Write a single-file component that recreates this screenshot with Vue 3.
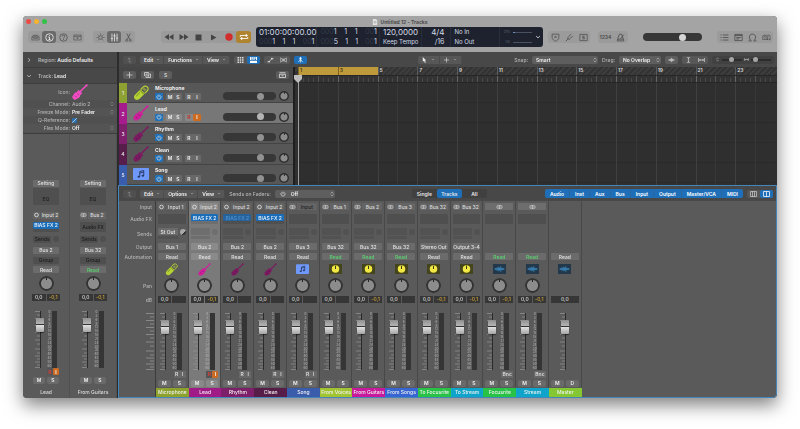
<script setup>
import { ref } from 'vue'

const tracks = ref([
  { n: 1, name: 'Microphone', color: '#8ea233', icon: 'mic', tint: '#b5d334' },
  { n: 2, name: 'Lead', color: '#a61c8d', icon: 'guitar', tint: '#cf1f9c', selected: true },
  { n: 3, name: 'Rhythm', color: '#7e206c', icon: 'guitar', tint: '#7c1b62' },
  { n: 4, name: 'Clean', color: '#571d4b', icon: 'guitar', tint: '#7c1b62' },
  { n: 5, name: 'Song', color: '#3a5cad', icon: 'song', tint: '#6f98fb' },
])

const strips = ref([
  { name: 'Microphone', color: '#8ca22c', input: 'Input 1', send: 'St Out', out: 'Bus 1', icon: 'mic', tint: '#b5d334', rec: true },
  { name: 'Lead', color: '#a01b86', input: 'Input 2', fx: 'on', out: 'Bus 2', icon: 'guitar', tint: '#cf1f9c', peak: '-0,1', rec: true, armed: true, selected: true },
  { name: 'Rhythm', color: '#7e1f69', input: 'Input 2', fx: 'off', out: 'Bus 2', icon: 'guitar', tint: '#7c1b62', rec: true },
  { name: 'Clean', color: '#561d48', input: 'Input 2', fx: 'on', out: 'Bus 2', icon: 'guitar', tint: '#7c1b62', rec: true },
  { name: 'Song', color: '#3a5cab', input: 'Input', dim: true, stereo: true, out: 'Bus 3', icon: 'song', tint: '#6f98fb', rec: true },
  { name: 'From Voices', color: '#a2c433', input: 'Bus 1', stereo: true, out: 'Bus 32', green: true, icon: 'clock' },
  { name: 'From Guitars', color: '#c8189b', input: 'Bus 2', stereo: true, out: 'Bus 32', green: true, icon: 'clock', peak: '-0,1' },
  { name: 'From Songs', color: '#3765d1', input: 'Bus 3', stereo: true, out: 'Bus 32', green: true, icon: 'clock' },
  { name: 'To Focusrite', color: '#28c247', input: 'Bus 32', stereo: true, out: 'Stereo Out', icon: 'clock', peak: '-0,1' },
  { name: 'To Stream', color: '#0fa4c9', input: 'Bus 32', stereo: true, out: 'Output 3-4', icon: 'clock', peak: '-0,1' },
  { name: 'Focusrite', color: '#28c247', output: true, green: true, icon: 'wave', peak: '-0,1' },
  { name: 'Stream', color: '#0fa4c9', output: true, green: true, icon: 'wave', peak: '-0,1' },
  { name: 'Master', color: '#84c732', master: true, icon: 'wave' },
])

const inspectorStrips = ref([
  { name: 'Lead', input: 'Input 2', fx: true, out: 'Bus 2', rec: true },
  { name: 'From Guitars', input: 'Bus 2', stereo: true, out: 'Bus 32', green: true },
])

const bars = Array.from({ length: 24 }, (_, i) => i + 1)
const meterMarks = [0, 3, 6, 9, 12, 15, 18, 21, 24, 30, 35, 40, 45, 50, 60]
const faderTicks = [0.5, 4, 7.5, 11, 14.5, 18, 21.5, 25, 29, 33, 38, 42, 45, 48, 51, 54, 56.5]
const filters = ['Audio', 'Inst', 'Aux', 'Bus', 'Input', 'Output', 'Master/VCA', 'MIDI']
</script>

<template>
  <svg class="sprite" aria-hidden="true">
    <symbol id="guitar" viewBox="0 0 20 20">
      <path fill="currentColor" d="M18.600 .300 19.800 1.400 18.800 3.200 17.700 3.400 10.800 10.400 12.400 10.600C13.200 11 12.900 11.800 12.200 12.200 10.800 12.900 10.400 13.600 10.200 14.800 10 16.800 8.400 17.600 7 18.200 5.800 18.800 5 19.800 3.600 19.600 2.200 19.400 .500 17.600 .400 16.200 .400 14.900 1.600 14.300 2.200 13.200 2.900 11.700 3.500 10.400 5.300 10.200 6.500 10 7 9.200 7.400 8.200 7.700 7.500 8.600 7.200 9 8L9.200 9.200 16.500 2.200 16.900 .900Z" />
      <path stroke="#0006" stroke-width="1" fill="none" d="M3.800 14.600 5.800 16.600M6.600 11.900 8.600 13.900" />
    </symbol>
    <symbol id="mic" viewBox="0 0 20 20">
      <path fill="currentColor" d="M2.600 12.200 9.300 5.200 14.900 10.600 8.300 17.300C6.600 18.900 4 19.300 2.300 17.600S1 13.900 2.600 12.200Z" />
      <path fill="none" stroke="currentColor" stroke-width="1.500" d="M9.900 5.300 12.600 2.600C14.300 1 16.300 1 17.800 2.400S19.200 5.900 17.600 7.500L14.900 10.200" />
      <path fill="currentColor" d="M11.800 5.200 14 3 17 6 14.800 8.200Z" opacity=".5" />
      <path fill="none" stroke="#0007" stroke-width="1" d="M8.500 6.500 13.800 11.800M4 14 8.500 9.500" />
    </symbol>
    <symbol id="song" viewBox="0 0 32 24">
      <rect width="32" height="24" rx="2" fill="currentColor" />
      <path fill="none" stroke="#26365c" stroke-width="1.800" d="M13.500 17V7L21.500 5V15M13.500 10 21.500 8" />
      <ellipse cx="11.600" cy="17.500" rx="2.500" ry="2" fill="#26365c" /><ellipse cx="19.600" cy="15.500" rx="2.500" ry="2" fill="#26365c" />
    </symbol>
    <symbol id="clock" viewBox="0 0 26 20">
      <rect width="26" height="20" fill="#45451d" />
      <circle cx="13" cy="10" r="7.500" fill="#f1e845" /><path stroke="#3c3b12" stroke-width="2" d="M13 3.500V10" />
    </symbol>
    <symbol id="wave" viewBox="0 0 26 20">
      <rect width="26" height="20" fill="#24384b" />
      <path stroke="#3e94cf" stroke-width="1.500" d="M3 10H23M5.500 8.500V11.500M8 7V13M10.500 5.500V14.500M13 7V13M15.500 4.500V15.500M18 7.500V12.500M20.500 8.500V11.500" />
    </symbol>
    <symbol id="power" viewBox="0 0 10 10"><path fill="none" stroke="currentColor" stroke-width="1.100" d="M5 1V5M3 2.300A3.400 3.400 0 1 0 7 2.300" /></symbol>
    <symbol id="mono" viewBox="0 0 10 10"><circle cx="5" cy="5" r="3" fill="none" stroke="currentColor" stroke-width="1.500" /></symbol>
    <symbol id="stereo" viewBox="0 0 14 10"><circle cx="5" cy="5" r="3.300" fill="none" stroke="currentColor" stroke-width="1.300" /><circle cx="9" cy="5" r="3.300" fill="none" stroke="currentColor" stroke-width="1.300" /></symbol>
    <symbol id="down" viewBox="0 0 10 10"><path fill="none" stroke="currentColor" stroke-width="1.500" d="M2 3.500 5 6.500 8 3.500" /></symbol>
    <symbol id="updown" viewBox="0 0 10 14"><path fill="none" stroke="currentColor" stroke-width="1.300" d="M2 5.500 5 2.500 8 5.500M2 8.500 5 11.500 8 8.500" /></symbol>
    <symbol id="back" viewBox="0 0 10 10"><path fill="none" stroke="currentColor" d="M2 4 4.500 1.500 7 4M4.500 1.500V8.500H8" /></symbol>
    <symbol id="library" viewBox="0 0 20 16"><path fill="none" stroke="currentColor" stroke-width="1.500" d="M2 7 5 3H15L18 7V13.500H2ZM2 7H18M6 7V10H14V7M6 5H14" /></symbol>
    <symbol id="info" viewBox="0 0 16 16"><circle cx="8" cy="8" r="6.700" fill="none" stroke="currentColor" stroke-width="1.600" /><path stroke="currentColor" stroke-width="1.800" d="M8 7V12M8 3.800V5.500M6 7H8M6 12H10" /></symbol>
    <symbol id="help" viewBox="0 0 16 16"><circle cx="8" cy="8" r="6.700" fill="none" stroke="currentColor" stroke-width="1.400" /><path fill="none" stroke="currentColor" stroke-width="1.500" d="M5.700 6C5.700 3 10.500 3.200 10.300 6 10.200 7.500 8 7.500 8 9.700M8 11V12.600" /></symbol>
    <symbol id="toolbar" viewBox="0 0 20 16"><path fill="none" stroke="currentColor" stroke-width="1.500" d="M2 2.500H18V13.500H2ZM2 5.500H18" /><path fill="currentColor" d="M7 8H13L10 12Z" /></symbol>
    <symbol id="smart" viewBox="0 0 16 16"><circle cx="8" cy="8" r="3.200" fill="none" stroke="currentColor" stroke-width="1.400" /><path stroke="currentColor" stroke-width="1.400" d="M8 1V3M1 8H3M13 8H15M3 3 4.500 4.500M13 3 11.500 4.500M3 13 4.500 11.500M13 13 11.500 11.500" /></symbol>
    <symbol id="mixer" viewBox="0 0 16 16"><path fill="none" stroke="currentColor" stroke-width="1.500" d="M3.500 1V15M8 1V15M12.500 1V15M1.500 10H5.500M6 5H10M10.500 9H14.500" /></symbol>
    <symbol id="scissors" viewBox="0 0 16 16"><path fill="none" stroke="currentColor" stroke-width="1.400" d="M5 1 10 11M11 1 6 11" /><circle cx="4.800" cy="13" r="1.800" fill="none" stroke="currentColor" stroke-width="1.300" /><circle cx="11.200" cy="13" r="1.800" fill="none" stroke="currentColor" stroke-width="1.300" /></symbol>
    <symbol id="rew" viewBox="0 0 20 14"><path fill="currentColor" d="M10 1V13L1 7ZM19 1V13L10 7Z" /></symbol>
    <symbol id="fwd" viewBox="0 0 20 14"><path fill="currentColor" d="M1 1V13L10 7ZM10 1V13L19 7Z" /></symbol>
    <symbol id="stop" viewBox="0 0 14 14"><path fill="currentColor" d="M1 1H13V13H1Z" /></symbol>
    <symbol id="play" viewBox="0 0 14 14"><path fill="currentColor" d="M2 1 13 7 2 13Z" /></symbol>
    <symbol id="record" viewBox="0 0 14 14"><circle cx="7" cy="7" r="6.500" fill="#d22c2b" /></symbol>
    <symbol id="cycle" viewBox="0 0 20 16"><path fill="none" stroke="currentColor" stroke-width="1.700" d="M2.500 8V5H15M17.500 8V11H5" /><path fill="currentColor" d="M13.500 1.500 18 5 13.500 8.500ZM6.500 7.500 2 11 6.500 14.500Z" /></symbol>
    <symbol id="shield" viewBox="0 0 16 16"><path fill="none" stroke="currentColor" stroke-width="1.400" d="M2 2H14V8C14 11 11 13.500 8 14.500 5 13.500 2 11 2 8ZM6 5 10 9M10 5 6 9" /></symbol>
    <symbol id="tuner" viewBox="0 0 16 16"><path fill="none" stroke="currentColor" stroke-width="1.500" d="M1.500 14.500 6 10M5.500 10.500C3.500 8 6 7 11 2M5.500 10.500C8 12.500 9 10 14 5" /></symbol>
    <symbol id="solo" viewBox="0 0 16 16"><path fill="none" stroke="currentColor" stroke-width="1.400" d="M1.500 2.500H14.500V13.500H1.500ZM10 5.500H6.500V8H9.500V10.500H6" /></symbol>
    <symbol id="metronome" viewBox="0 0 16 16"><path fill="none" stroke="currentColor" stroke-width="1.500" d="M6 2H10L14 14H2ZM3 11H13M8 10 14 3" /></symbol>
    <symbol id="list" viewBox="0 0 16 14"><path fill="none" stroke="currentColor" stroke-width="1.500" d="M1 2.500H3M5 2.500H15M1 7H3M5 7H15M1 11.500H3M5 11.500H15" /></symbol>
    <symbol id="note" viewBox="0 0 16 14"><path fill="none" stroke="currentColor" stroke-width="1.500" d="M1.500 1.500H14.500V12.500H1.500ZM1.500 3.500H14.500M4 7H12M4 9.500H9" /></symbol>
    <symbol id="loop" viewBox="0 0 16 16"><path fill="none" stroke="currentColor" stroke-width="1.500" d="M1 14H6C1 11 1 2 8 2S15 11 10 14H15" /></symbol>
    <symbol id="media" viewBox="0 0 20 16"><path fill="none" stroke="currentColor" stroke-width="1.400" d="M1.500 4.500H11V12.500H1.500ZM4 4.500 5 2.500H8L9 4.500M13 11V2L18 4V12" /><circle cx="6" cy="8.500" r="2" fill="none" stroke="currentColor" /><circle cx="12" cy="12" r="1.800" fill="currentColor" /><circle cx="16.800" cy="12.500" r="1.800" fill="currentColor" /></symbol>
    <symbol id="doc" viewBox="0 0 12 14"><path fill="#e4e4e4" d="M1 0H8L11 3V14H1Z" /><circle cx="6" cy="7.500" r="2.500" fill="none" stroke="#999" stroke-width="1.400" /></symbol>
    <symbol id="grid" viewBox="0 0 12 12"><path fill="currentColor" d="M0 0H3V3H0ZM4.500 0H7.500V3H4.500ZM9 0H12V3H9ZM0 4.500H3V7.500H0ZM4.500 4.500H7.500V7.500H4.500ZM9 4.500H12V7.500H9ZM0 9H3V12H0ZM4.500 9H7.500V12H4.500ZM9 9H12V12H9Z" /></symbol>
    <symbol id="lanes" viewBox="0 0 14 12"><path fill="currentColor" d="M0 0H3V6H0ZM4.500 0H7V4H4.500ZM8.500 0H11V4H8.500ZM12 0H14V6H12ZM0 7.500H14V12H0ZM4 5H10V6H4Z" /></symbol>
    <symbol id="automation" viewBox="0 0 16 12"><path fill="none" stroke="currentColor" stroke-width="1.500" d="M1 10H5L11 3H15" /><circle cx="5" cy="9.500" r="2" fill="currentColor" /><circle cx="11" cy="3" r="2" fill="currentColor" /></symbol>
    <symbol id="flex" viewBox="0 0 16 12"><path fill="none" stroke="currentColor" stroke-width="1.300" d="M1.500 1V11L7 6ZM14.500 1V11L9 6ZM6 2 10 10M10 2 6 10" /></symbol>
    <symbol id="catch" viewBox="0 0 14 14"><path fill="none" stroke="currentColor" stroke-width="1.500" d="M7 1V13M7 5 2 12M7 5 12 12M4 4 10 4" /><circle cx="7" cy="2.500" r="2" fill="currentColor" /></symbol>
    <symbol id="pointer" viewBox="0 0 10 14"><path fill="currentColor" d="M1 0 9 8H6L8 13 6 14 4 9 1 11Z" /></symbol>
    <symbol id="cross" viewBox="0 0 12 12"><path stroke="currentColor" stroke-width="1.300" d="M6 0V12M0 6H12" /></symbol>
    <symbol id="dup" viewBox="0 0 14 12"><path fill="none" stroke="currentColor" stroke-width="1.400" d="M1 8V1H9V3M4 4H13V11H4ZM8.500 5.500V9.500M6.500 7.500H10.500" /></symbol>
    <symbol id="tray" viewBox="0 0 14 12"><path fill="none" stroke="currentColor" stroke-width="1.500" d="M1 4.500H13V11H1ZM1 1.500H13M5 7.500H9" /></symbol>
    <symbol id="ripple" viewBox="0 0 16 12"><path stroke="currentColor" stroke-width="1.300" d="M1 6H15M3 4.500V7.500M5.500 3V9M8 1V11M10.500 3V9M13 4.500V7.500" /></symbol>
    <symbol id="vzoom" viewBox="0 0 10 14"><path fill="none" stroke="currentColor" stroke-width="1.300" d="M1 1H9M1 13H9M5 2V12M3 5 5 3 7 5M3 9 5 11 7 9" /></symbol>
    <symbol id="hzoom" viewBox="0 0 14 10"><path fill="none" stroke="currentColor" stroke-width="1.300" d="M1 1V9M13 1V9M2 5H12M5 3 3 5 5 7M9 3 11 5 9 7" /></symbol>
    <symbol id="cols3" viewBox="0 0 14 12"><path fill="none" stroke="currentColor" stroke-width="1.300" d="M1 1H13V11H1ZM5 1V11M9 1V11" /></symbol>
    <symbol id="cols2" viewBox="0 0 14 12"><path fill="none" stroke="currentColor" stroke-width="1.500" d="M1 1H13V11H1ZM7 1V11" /></symbol>
  </svg>

  <div class="page">
    <div class="window">
      <header class="chrome">
        <div class="titlebar">
          <div class="lights"><i class="red"></i><i class="amber"></i><i class="green"></i></div>
          <h1><svg class="docicon"><use href="#doc" /></svg>Untitled 12 - Tracks</h1>
        </div>
        <div class="controlbar">
          <div class="group">
            <button aria-label="Library"><svg><use href="#library" /></svg></button>
            <button class="on" aria-label="Inspector"><svg><use href="#info" /></svg></button>
            <button aria-label="Quick Help"><svg><use href="#help" /></svg></button>
            <button aria-label="Toolbar"><svg><use href="#toolbar" /></svg></button>
          </div>
          <div class="group second">
            <button aria-label="Smart Controls"><svg><use href="#smart" /></svg></button>
            <button class="on" aria-label="Mixer"><svg><use href="#mixer" /></svg></button>
            <button aria-label="Editors"><svg><use href="#scissors" /></svg></button>
          </div>
          <div class="group transport">
            <button aria-label="Rewind"><svg><use href="#rew" /></svg></button>
            <button aria-label="Forward"><svg><use href="#fwd" /></svg></button>
            <button aria-label="Stop"><svg class="small"><use href="#stop" /></svg></button>
            <button aria-label="Play"><svg class="small"><use href="#play" /></svg></button>
            <button aria-label="Record"><svg><use href="#record" /></svg></button>
            <button class="gold" aria-label="Cycle"><svg><use href="#cycle" /></svg></button>
          </div>
          <div class="lcd">
            <div class="cell">
              <div>01:00:00:00.00</div>
              <div class="pos"><span><s>000</s>1</span><span>1</span><span>1</span><span><s>00</s>1</span></div>
            </div>
            <div class="cell">
              <div class="pos"><span><s>000</s>1</span><span>1</span><span>1</span><span><s>00</s>1</span></div>
              <div class="pos"><span><s>000</s>5</span><span>1</span><span>1</span><span><s>00</s>1</span></div>
            </div>
            <div class="cell"><div>120,0000</div><div class="txt">Keep Tempo</div></div>
            <div class="cell right"><div>4/4</div><div class="sig">/16</div></div>
            <div class="cell"><div class="txt">No In</div><div class="txt">No Out</div></div>
            <div class="cell load"><div>CPU<b class="cpu"></b></div><div>HD<b></b></div></div>
            <button class="more" aria-label="Display mode"><svg><use href="#down" /></svg></button>
          </div>
          <div class="group">
            <button aria-label="Replace"><svg><use href="#shield" /></svg></button>
            <button aria-label="Tuner"><svg><use href="#tuner" /></svg></button>
            <button aria-label="Solo"><svg><use href="#solo" /></svg></button>
          </div>
          <div class="group count">
            <button>1234</button>
            <button aria-label="Metronome"><svg><use href="#metronome" /></svg></button>
          </div>
          <input class="bar output-level" type="range" value="72" aria-label="Master volume" />
          <div class="group last">
            <button aria-label="List editors"><svg><use href="#list" /></svg></button>
            <button aria-label="Note pad"><svg><use href="#note" /></svg></button>
            <button aria-label="Loop browser"><svg><use href="#loop" /></svg></button>
            <button aria-label="Media browser"><svg><use href="#media" /></svg></button>
          </div>
        </div>
      </header>

      <div class="body">
        <aside class="inspector">
          <button class="head"><svg class="turned"><use href="#down" /></svg><span>Region: <b>Audio Defaults</b></span></button>
          <button class="head"><svg><use href="#down" /></svg><span>Track: <b>Lead</b></span></button>
          <dl class="params">
            <div class="iconrow"><dt>Icon:</dt><dd><svg class="bigicon"><use href="#guitar" /></svg></dd></div>
            <div><dt>Channel:</dt><dd>Audio 2<svg class="ud"><use href="#updown" /></svg></dd></div>
            <div><dt><label for="freeze">Freeze Mode:</label></dt><dd><select id="freeze"><option>Pre Fader</option></select><svg class="ud"><use href="#updown" /></svg></dd></div>
            <div><dt><label for="qref">Q-Reference:</label></dt><dd><input id="qref" type="checkbox" checked /></dd></div>
            <div><dt><label for="flexmode">Flex Mode:</label></dt><dd><select id="flexmode"><option>Off</option></select><svg class="ud"><use href="#updown" /></svg></dd></div>
          </dl>
          <div class="pair">
            <section v-for="s in inspectorStrips" :key="s.name" class="istrip">
              <button class="slot">Setting</button>
              <button class="slot well eq">EQ</button>
              <div class="io"><button :aria-label="'Format ' + s.name"><svg><use :href="s.stereo ? '#stereo' : '#mono'" /></svg></button><button>{{ s.input }}</button></div>
              <div class="slot well fxwell"><button v-if="s.fx" class="fx">BIAS FX 2</button><template v-else>Audio FX</template></div>
              <div class="sends"><button class="slot well">Sends</button><i></i></div>
              <button class="slot">{{ s.out }}</button>
              <button class="slot well">Group</button>
              <button class="slot" :class="{ read: s.green }">Read</button>
              <input class="knob" type="range" :aria-label="'Pan ' + s.name" />
              <div class="db"><span>0,0</span><span class="peak">-0,1</span></div>
              <div class="faderbox">
                <svg class="ticks" viewBox="0 0 5 57"><path v-for="(t, i) in faderTicks" :key="t" stroke="currentColor" stroke-width=".7" :d="`M${i % 2 ? 2 : 0} ${t}H5`" /></svg>
                <input class="fader" type="range" value="84" :aria-label="'Volume ' + s.name" />
                <div class="marks"><span v-for="m in meterMarks" :key="m">{{ m }}</span></div>
                <div class="meter"></div>
              </div>
              <div class="ri"><template v-if="s.rec"><button class="r armed">R</button><button class="i armed">I</button></template></div>
              <div class="ms"><button>M</button><button>S</button></div>
              <div class="iname">{{ s.name }}</div>
            </section>
          </div>
        </aside>

        <main class="work">
          <section class="arrange">
            <div class="strip-bar">
              <button class="tb dimmed" aria-label="Up"><svg><use href="#back" /></svg></button>
              <div class="menus"><button>Edit<svg><use href="#down" /></svg></button><button>Functions<svg><use href="#down" /></svg></button><button>View<svg><use href="#down" /></svg></button></div>
              <div class="seg"><button aria-label="Grid"><svg><use href="#grid" /></svg></button><button class="blue" aria-label="Lanes"><svg><use href="#lanes" /></svg></button></div>
              <div class="seg"><button aria-label="Automation"><svg><use href="#automation" /></svg></button><button aria-label="Flex"><svg><use href="#flex" /></svg></button></div>
              <button class="tb blue" aria-label="Catch playhead"><svg><use href="#catch" /></svg></button>
              <div class="menus tools"><button aria-label="Pointer tool"><svg><use href="#pointer" /></svg><svg><use href="#down" /></svg></button><button aria-label="Marquee tool"><svg><use href="#cross" /></svg><svg><use href="#down" /></svg></button></div>
              <label for="snap">Snap:</label>
              <div class="pick snap"><select id="snap"><option>Smart</option></select><svg><use href="#updown" /></svg></div>
              <label for="drag">Drag:</label>
              <div class="pick drag"><select id="drag"><option>No Overlap</option></select><svg><use href="#updown" /></svg></div>
              <button class="tb" aria-label="Waveform zoom"><svg><use href="#ripple" /></svg></button>
              <div class="seg"><button aria-label="Fit vertically"><svg><use href="#vzoom" /></svg></button><button aria-label="Fit horizontally"><svg><use href="#hzoom" /></svg></button></div>
              <div class="zooms"><svg><use href="#updown" /></svg><input type="range" value="45" aria-label="Vertical zoom" /><svg><use href="#hzoom" /></svg><input type="range" value="10" aria-label="Horizontal zoom" /></div>
            </div>
            <div class="arrange-body">
              <div class="headers">
                <div class="addbar"><button class="tb" aria-label="Add track"><svg><use href="#cross" /></svg></button><button class="tb" aria-label="Duplicate track"><svg><use href="#dup" /></svg></button><button class="tb">S</button><button class="tb end" aria-label="Track header settings"><svg><use href="#tray" /></svg></button></div>
                <article v-for="t in tracks" :key="t.n" class="track" :class="{ selected: t.selected }">
                  <div class="num" :style="{ background: t.color }">{{ t.n }}</div>
                  <svg class="ticon" :style="{ color: t.tint }"><use :href="'#' + t.icon" /></svg>
                  <div class="info">
                    <h2>{{ t.name }}</h2>
                    <div class="btns">
                      <button class="pwr" :aria-label="'Power ' + t.name"><svg><use href="#power" /></svg></button>
                      <div><button>M</button><button>S</button></div>
                      <div><button :class="{ rarm: t.selected }">R</button><button :class="{ iarm: t.selected }">I</button></div>
                    </div>
                  </div>
                  <input class="bar" type="range" value="76" :aria-label="'Volume ' + t.name" />
                  <input class="knob mini" type="range" :aria-label="'Pan ' + t.name" />
                </article>
              </div>
              <div class="gutter"></div>
              <div class="timeline">
                <div class="ruler">
                  <div v-for="b in bars" :key="b" class="bar-cell" :class="{ cyc: b < 5 }">{{ b % 2 ? b : '' }}</div>
                </div>
                <div class="ruler beats"><div v-for="b in bars" :key="b" class="beat-cell"><i></i><i></i><i></i></div></div>
                <div class="canvas"><div v-for="b in bars" :key="b"></div></div>
                <div class="playhead"><svg viewBox="0 0 8 8"><path fill="#bdbdbd" d="M0 0H8V4L4 8 0 4Z" /></svg></div>
              </div>
            </div>
          </section>

          <section class="mixer">
            <div class="strip-bar">
              <button class="tb dimmed" aria-label="Up"><svg><use href="#back" /></svg></button>
              <div class="menus"><button>Edit<svg><use href="#down" /></svg></button><button>Options<svg><use href="#down" /></svg></button><button>View<svg><use href="#down" /></svg></button></div>
              <label for="sof">Sends on Faders:</label>
              <div class="pick sof"><button aria-label="Sends on faders power"><svg class="pw"><use href="#power" /></svg></button><select id="sof"><option>Off</option></select><svg><use href="#updown" /></svg></div>
              <div class="tabs"><button>Single</button><button class="blue">Tracks</button><button>All</button></div>
              <div class="filters"><button v-for="f in filters" :key="f">{{ f }}</button></div>
              <div class="seg views"><button aria-label="Narrow strips"><svg><use href="#cols3" /></svg></button><button class="blue" aria-label="Wide strips"><svg><use href="#cols2" /></svg></button></div>
            </div>
            <div class="mixbody">
              <div class="rowlabels">
                <span>Input</span><span>Audio FX</span><span>Sends</span><span>Output</span><span>Automation</span><span></span><span>Pan</span><span>dB</span>
                <svg class="ticks scale" viewBox="0 0 9 57"><path v-for="(t, i) in faderTicks" :key="t" stroke="currentColor" stroke-width=".8" :d="`M${i % 2 ? 5 : 1} ${t}H9`" /></svg>
              </div>
              <div class="strips">
                <section v-for="s in strips" :key="s.name" class="cstrip" :class="{ selected: s.selected, solo: s.master }">
                  <div class="io" v-if="s.input"><button :aria-label="'Format ' + s.name"><svg><use :href="s.stereo ? '#stereo' : '#mono'" /></svg></button><button :class="{ dim: s.dim }">{{ s.input }}</button></div>
                  <div class="io" v-else-if="s.output"><button class="wide" :aria-label="'Format ' + s.name"><svg><use href="#stereo" /></svg></button></div>
                  <div v-else></div>
                  <div v-if="!s.master" class="slot well fxwell"><button v-if="s.fx" class="fx" :class="s.fx">BIAS FX 2</button></div>
                  <div v-else></div>
                  <div v-if="s.input" class="sendbox">
                    <button v-if="s.send" class="send lit">{{ s.send }}</button><span v-else class="send"></span><i :class="{ lit: s.send }"></i><span class="send thin"></span>
                  </div>
                  <div v-else></div>
                  <button v-if="s.out" class="slot">{{ s.out }}</button>
                  <div v-else></div>
                  <button class="slot" :class="{ read: s.green }">Read</button>
                  <svg class="sicon" :class="s.icon" :style="{ color: s.tint }"><use :href="'#' + s.icon" /></svg>
                  <input v-if="!s.master" class="knob" type="range" :aria-label="'Pan ' + s.name" />
                  <div v-else></div>
                  <div class="db"><span>0,0</span><span v-if="!s.master" class="peak">{{ s.peak }}</span></div>
                  <div class="faderbox">
                    <svg class="ticks" viewBox="0 0 5 57"><path v-for="(t, i) in faderTicks" :key="t" stroke="currentColor" stroke-width=".7" :d="`M${i % 2 ? 2 : 0} ${t}H5`" /></svg>
                    <input class="fader" type="range" value="84" :aria-label="'Volume ' + s.name" />
                    <template v-if="!s.master"><div class="marks"><span v-for="m in meterMarks" :key="m">{{ m }}</span></div><div class="meter"></div></template>
                  </div>
                  <div class="ri">
                    <template v-if="s.rec"><button class="r" :class="{ armed: s.armed }">R</button><button class="i" :class="{ armed: s.armed }">I</button></template>
                    <button v-else-if="s.output" class="bnc">Bnc</button>
                  </div>
                  <div class="ms"><button>M</button><button>{{ s.master ? 'D' : 'S' }}</button></div>
                  <div class="cname" :style="{ background: s.color }">{{ s.name }}</div>
                </section>
              </div>
              <div class="rest"></div>
            </div>
          </section>
        </main>
      </div>
    </div>
  </div>
</template>

<style>
body { background: #fff; }
</style>

<style scoped>
* { box-sizing: border-box; margin: 0; padding: 0; }
.sprite { position: absolute; width: 0; height: 0; }
button, input, select { font: inherit; color: inherit; border: 0; background: none; min-width: 0; appearance: none; outline: 0; border-radius: 0; }
button { display: flex; align-items: center; justify-content: center; white-space: nowrap; }
svg { display: block; width: 8px; height: 8px; flex: none; }
i { display: block; }

.page { padding: 16px 23px 31px; font: 500 5px/6px Inter, "Liberation Sans", sans-serif; color: #dcdcdc; filter: drop-shadow(0 7px 9px rgba(0, 0, 0, .5)); }
.window { border-radius: 4px; overflow: hidden; background: #5a5a5a; }

/* title bar and control bar */
.chrome { background: #a4a4a4; height: 36px; color: #505050; }
.titlebar { display: grid; place-items: center; height: 11px; }
.titlebar > * { grid-area: 1 / 1; }
.lights { display: flex; gap: 3px; justify-self: start; padding-left: 3px; }
.lights i { width: 5px; height: 5px; border-radius: 50%; }
.red { background: #ee4b47; } .amber { background: #f5b32f; } .green { background: #31c146; }
h1 { display: flex; align-items: center; gap: 2px; font-size: 5px; font-weight: 700; color: #4c4c4c; }
.docicon { width: 6px; height: 6px; }
.controlbar { display: flex; align-items: center; height: 20px; padding: 0 4px 0 5px; }
.group { display: flex; align-items: center; background: #9b9b9b; border-radius: 3px; height: 12px; }
.group button { width: 14px; height: 12px; border-radius: 3px; }
.group svg { width: 9px; height: 9px; }
.group .on { background: #6a6a6a; color: #e2e2e2; }
.second { margin-left: 9px; }
.transport { margin-left: 26px; color: #444; }
.transport button { width: 15px; }
.transport svg { width: 10px; height: 8px; }
.transport .small { width: 7px; height: 7px; }
.transport .gold { background: #b0832e; color: #fff; }
.lcd { flex: 1; display: grid; grid-template-columns: 61fr 62fr 42fr 29fr 48fr 34fr 9px; height: 20px; margin: 0 5px; background: #1d222e; border-radius: 3px; color: #d5dbe6; font: 400 8px/10px Inter, "Liberation Sans", sans-serif; }
.cell { border-right: 1px solid #272d39; padding: 0 2px 0 3px; display: flex; flex-direction: column; white-space: nowrap; min-width: 0; }
.cell .txt { font-size: 6px; }
.cell.right { text-align: right; padding-right: 6px; }
.cell .sig { font-size: 7px; }
.load { color: #5e6675; font-size: 3px; border: 0; }
.load div { display: flex; align-items: center; gap: 3px; justify-content: flex-end; }
.load b { width: 19px; height: 1px; background: #4a5261; }
.load .cpu { background: linear-gradient(90deg, #6d8fc0 12%, #4a5261 12%); }
.pos { display: flex; justify-content: space-between; font-size: 7px; }
.pos s { text-decoration: none; color: #353b48; }
.more svg { width: 6px; height: 6px; }
.count { margin: 0 15px 0 8px; }
.count button { width: 15px; font-size: 5px; font-weight: 700; }
.bar { height: 8px; border-radius: 4px; background: #373737; }
.bar::-webkit-slider-thumb { appearance: none; width: 7px; height: 7px; border-radius: 50%; background: #929292; }
.output-level { width: 59px; padding: 0 3px; }
.output-level::-webkit-slider-thumb { background: #d5d5d5; }
.last { margin-left: 15px; }

.body { display: flex; }

/* inspector */
.inspector { flex: 0 0 95px; border-right: 1px solid #2c2c2c; background: #5a5a5a; display: flex; flex-direction: column; }
.head { height: 16px; justify-content: flex-start; gap: 6px; padding-left: 3px; background: #484848; border-bottom: 1px solid #3d3d3d; color: #bdbdbd; }
.head b { color: #efefef; font-weight: 600; }
.head svg { width: 6px; height: 6px; }
.turned { transform: rotate(-90deg); }
.params { height: 50px; padding-bottom: 2px; border-bottom: 1px solid #3e3e3e; color: #b2b2b2; background: #505050; }
.params > div { display: grid; grid-template-columns: 47px 1fr; gap: 2px; height: 8px; align-items: center; }
.params > div:nth-child(odd) { background: #545454; }
.params .iconrow { height: 16px; }
.params dt { text-align: right; white-space: nowrap; }
.params dd { display: flex; align-items: center; justify-content: space-between; padding-right: 3px; white-space: nowrap; }
.params select { color: #f2f2f2; font-weight: 600; }
.ud { width: 4px; height: 6px; }
.bigicon { width: 16px; height: 16px; color: #f24cc4; }
.params input { width: 5px; height: 5px; border-radius: 1px; background: linear-gradient(135deg, #2c6ea9 45%, #a9cbe8 45%, #a9cbe8 60%, #2c6ea9 60%); }
.pair { flex: 1; display: grid; grid-template-columns: 1fr 1fr; }
.istrip { display: grid; padding: 44px 10px 0; grid-template-rows: 10px 22px 10px 13px 12px 10px 10px 9px 19px 9px minmax(66px, 1fr) 7px 10px 13px; align-items: center; border-right: 1px solid #515151; }
.istrip > * { min-width: 0; }
.slot { height: 7px; width: 100%; border-radius: 1px; background: #6b6b6b; color: #e0e0e0; overflow: hidden; }
.well { background: #4f4f4f; color: #1c1c1c; }
.eq { height: 17px; align-self: start; padding-top: 4px; }
.fxwell { height: 10px; display: flex; align-items: center; justify-content: center; white-space: nowrap; }
.fx { width: 100%; height: 7px; background: #1b6db8; color: #f1f6fb; align-self: flex-start; border-radius: 1px; }
.fx.off { color: #4c95d6; background: #27629b; }
.io { display: flex; gap: 1px; }
.io button { height: 7px; background: #646464; flex: 1; }
.io button:first-child { flex: 0 0 7px; }
.io .wide:first-child { flex: 1; background: #6d6d6d; }
.io svg { width: 7px; height: 6px; }
.io .dim { color: #222; }
.sends { display: flex; gap: 2px; align-items: center; }
.sends .slot { width: 20px; }
.sends i { width: 6px; height: 6px; border-radius: 50%; background: #4f4f4f; }
.read, .cstrip .read { color: #5bd670; }
.knob { justify-self: center; width: 15px; height: 15px; border-radius: 50%; background: radial-gradient(circle, #8c8c8c 0 5px, #333 6px 7px, #555 8px); }
.knob::-webkit-slider-thumb { appearance: none; width: 1px; height: 15px; background: linear-gradient(transparent 2px, #222 2px, #222 4px, transparent 4px); }
.db { display: grid; grid-auto-flow: column; grid-auto-columns: 1fr; gap: 1px; margin: 0 -1px; }
.db span { height: 7px; background: #363636; text-align: center; line-height: 7px; }
.db .peak { color: #d0a637; }
.faderbox { align-self: end; display: flex; height: 57px; padding-left: 2px; }
.ticks { width: 5px; height: 57px; color: #969696; }
.fader { writing-mode: vertical-lr; direction: rtl; width: 8px; height: 57px; margin-left: -4px; background: linear-gradient(90deg, transparent 4px, #2a2a2a 4px, #2a2a2a 5px, transparent 5px); }
.fader::-webkit-slider-thumb { appearance: none; width: 8px; height: 14px; border-radius: 1px; background: linear-gradient(#8f8f8f, #b5b5b5 6px, #333 6px, #333 7px, #e2e2e2 7px, #a5a5a5); box-shadow: 0 1px 1px #0008; }
.marks { margin-left: 3px; width: 5px; display: flex; flex-direction: column; justify-content: space-between; font-size: 3px; line-height: 3px; color: #b0b0b0; }
.marks span { display: flex; justify-content: center; }
.meter { width: 5px; background: #353535; }
.ri { display: flex; justify-content: flex-end; height: 7px; }
.ri button { width: 6px; height: 7px; background: #676767; font-weight: 600; }
.ri .bnc { width: 12px; }
.ri .r.armed { background: #555; color: #e23b36; }
.ri .i.armed { background: #c96a25; color: #fff; border-radius: 1px; }
.ms { display: grid; grid-template-columns: 1fr 1fr; gap: 2px; }
.ms button { height: 7px; background: #6a6a6a; border-radius: 2px; color: #f0f0f0; font-weight: 600; }
.iname { white-space: nowrap; display: flex; justify-content: center; }

/* shared bar above the arrange area and the mixer */
.work { flex: 1; min-width: 0; display: flex; flex-direction: column; }
.strip-bar { display: flex; align-items: center; height: 15px; padding: 0 3px 0 4px; gap: 4px; background: #484848; }
.strip-bar label { color: #b6b6b6; white-space: nowrap; }
.tb { width: 13px; height: 8px; background: #5d5d5d; border-radius: 2px; color: #e6e6e6; }
.tb svg, .seg svg { width: 7px; height: 6px; }
.tb.dimmed { color: #909090; background: #505050; }
.blue { background: #1f6fb8; color: #fff; border-radius: 2px; }
.menus { display: flex; background: #575757; border-radius: 2px; height: 8px; color: #f2f2f2; font-weight: 600; }
.menus button { padding: 0 3px 0 4px; gap: 3px; border-right: 1px solid #4c4c4c; }
.menus svg { width: 4px; height: 5px; color: #b0b0b0; }
.menus .tools svg:first-child { color: #f2f2f2; }
.tools { margin: 0 48px 0 auto; }
.tools button { padding: 0 4px; gap: 4px; }
.tools svg:first-child { width: 5px; height: 6px; color: #eee; }
.seg { display: flex; background: #575757; border-radius: 2px; height: 8px; }
.seg button { width: 13px; }
.pick { display: flex; align-items: center; height: 8px; background: #5e5e5e; border-radius: 2px; color: #f2f2f2; font-weight: 600; padding: 0 1px 0 4px; }
.pick select { flex: 1; }
.pick svg { width: 4px; height: 6px; }
.snap { width: 66px; } .drag { width: 42px; }
.zooms { display: flex; align-items: center; gap: 2px; background: #414141; height: 8px; width: 62px; padding: 0 3px; border-radius: 2px; }
.zooms svg { width: 5px; height: 5px; }
.zooms input { width: 20px; height: 6px; flex: 1; background: linear-gradient(transparent 2px, #2c2c2c 2px, #2c2c2c 4px, transparent 4px); }
.zooms input::-webkit-slider-thumb { appearance: none; width: 5px; height: 5px; border-radius: 50%; background: #a5a5a5; }

/* arrange */
.arrange { flex: 1; display: flex; flex-direction: column; border-left: 1px solid #2c2c2c; }
.arrange-body { flex: 1; display: flex; }
.headers { flex: 0 0 174px; display: flex; flex-direction: column; background: #2b2b2b; }
.addbar { height: 16px; display: flex; align-items: center; gap: 5px; padding: 0 4px; background: #464646; }
.addbar .end { margin-left: auto; }
.track { flex: 1 0 20px; display: grid; grid-template-columns: 8px 28px 1fr 56px 10px; align-items: end; background: #575757; border-bottom: 1px solid #444; padding-right: 4px; }
.track.selected { background: #777; }
.num { align-self: stretch; display: grid; place-items: center; color: #e8e8e8; margin-bottom: -1px; }
.ticon { width: 16px; height: 16px; place-self: center; }
.info { padding-bottom: 2px; }
.info h2 { font-size: 5px; font-weight: 700; line-height: 6px; color: #f0f0f0; }
.btns { display: flex; gap: 3px; margin-top: 2px; color: #eee; font-weight: 600; }
.btns > div { display: flex; background: #686868; border-radius: 1px; }
.selected .btns > div { background: #888; }
.btns button { width: 8px; height: 7px; border-radius: 1px; }
.btns svg { width: 6px; height: 6px; }
.btns .pwr { background: #2272b9; }
.btns .rarm { color: #c22f2b; }
.btns .iarm { background: #cc6a1f; color: #fff; }
.track .bar { width: 53px; margin-bottom: 2px; padding: 0 1px; }
.track.selected .bar::-webkit-slider-thumb { background: #b4b4b4; }
.track .mini { width: 10px; height: 10px; margin-bottom: 1px; background: radial-gradient(circle, #8c8c8c 0 3px, #2e2e2e 4px 5px); }
.mini::-webkit-slider-thumb { height: 10px; background: linear-gradient(transparent 1px, #333 1px, #333 3px, transparent 3px); }
.gutter { width: 2px; background: #1f1f1f; }
.timeline { flex: 1; display: flex; flex-direction: column; position: relative; background: #2f2f2f; }
.ruler, .canvas { display: grid; grid-template-columns: repeat(24, 1fr); padding: 0 2px 0 3px; }
.ruler { height: 8px; background: repeating-linear-gradient(135deg, #333 0 2px, #3d3d3d 2px 4px); }
.bar-cell { border-left: 1px solid transparent; padding-left: 1px; line-height: 7px; color: #d8d8d8; font-weight: 600; }
.bar-cell:nth-child(odd) { border-color: #5a5a5a; }
.bar-cell.cyc { background: #bf9a3a; color: #443510; }
.bar-cell.cyc:nth-child(odd) { border-color: #7c6322; }
.beats { background: #333; border-bottom: 1px solid #262626; border-top: 1px solid #262626; }
.beat-cell { border-left: 1px solid #555; display: flex; justify-content: space-evenly; align-items: flex-end; }
.beat-cell:nth-child(odd) { border-color: #686868; }
.beat-cell i { width: 1px; height: 4px; background: #484848; }
.canvas { flex: 1; }
.canvas div { border-left: 1px solid #383838; background: repeating-linear-gradient(transparent 0 19px, #2a2a2a 19px 20px); }
.canvas div:nth-child(odd) { border-color: #404040; }
.playhead { position: absolute; left: -1px; top: 8px; bottom: 0; width: 8px; display: flex; justify-content: center; background: linear-gradient(90deg, transparent 4px, #a0a0a0 4px, #a0a0a0 5px, transparent 5px); }
.playhead svg { width: 8px; height: 8px; }

/* mixer */
.mixer { border: 1px solid #4586ba; border-bottom-right-radius: 4px; background: #5a5a5a; overflow: hidden; }
.sof { width: 60px; }
.sof button { width: 9px; margin-right: 3px; }
.sof .pw { width: 6px; height: 6px; }
.tabs { display: flex; margin: 0 54px 0 auto; background: #404040; border-radius: 2px; height: 9px; }
.tabs button { width: 25px; color: #e6e6e6; font-weight: 600; }
.filters { display: flex; background: #1f6fb8; border-radius: 2px; height: 9px; color: #fff; font-weight: 600; }
.filters button { padding: 0 5px; border-right: 1px solid #2a66a0; }
.filters button:last-child { border: 0; }
.mixbody { display: flex; }
.rowlabels, .cstrip { display: grid; grid-template-rows: 11px 14px 15px 11px 9px 16px 17px 11px minmax(65px, 1fr) 8px 10px 9px; align-items: center; }
.rowlabels { flex: 0 0 37px; padding-right: 3px; color: #b4b4b4; border-right: 1px solid #3c3c3c; }
.rowlabels span { display: flex; justify-content: flex-end; }
.scale { width: 9px; align-self: end; justify-self: end; margin-right: -2px; }
.strips { flex: 425 1 0; display: grid; grid-template-columns: repeat(13, minmax(0, 1fr)); }
.rest { flex: 194 1 0; }
.cstrip { min-width: 0; padding: 0 2px; border-right: 1px solid #484848; }
.cstrip > * { min-width: 0; }
.cstrip.selected { background: #7a7a7a; }
.selected .slot, .selected .io button, .selected .ms button { background: #8a8a8a; }
.selected .well { background: #6e6e6e; }
.cname { margin: 0 -3px 0 -2px; height: 9px; line-height: 9px; display: flex; justify-content: center; white-space: nowrap; color: #f0f0f0; overflow: hidden; }
.sendbox { display: grid; grid-template-columns: 1fr 6px; gap: 1px 2px; align-items: center; }
.send { height: 7px; background: #525252; border-radius: 1px; }
.send.lit { background: #6b6b6b; color: #e8e8e8; }
.send.thin { height: 3px; }
.sendbox i { width: 6px; height: 6px; border-radius: 50%; background: #515151; }
.sendbox i.lit { background: linear-gradient(135deg, #a8a8a8 60%, #333 60%); }
.selected .send, .selected .sendbox i { background: #6e6e6e; }
.sicon { width: 13px; height: 13px; justify-self: center; }
.sicon.song, .sicon.clock, .sicon.wave { height: 10px; }
.cstrip .db { margin: 0; }
.solo .faderbox { padding-left: 9px; }
</style>
